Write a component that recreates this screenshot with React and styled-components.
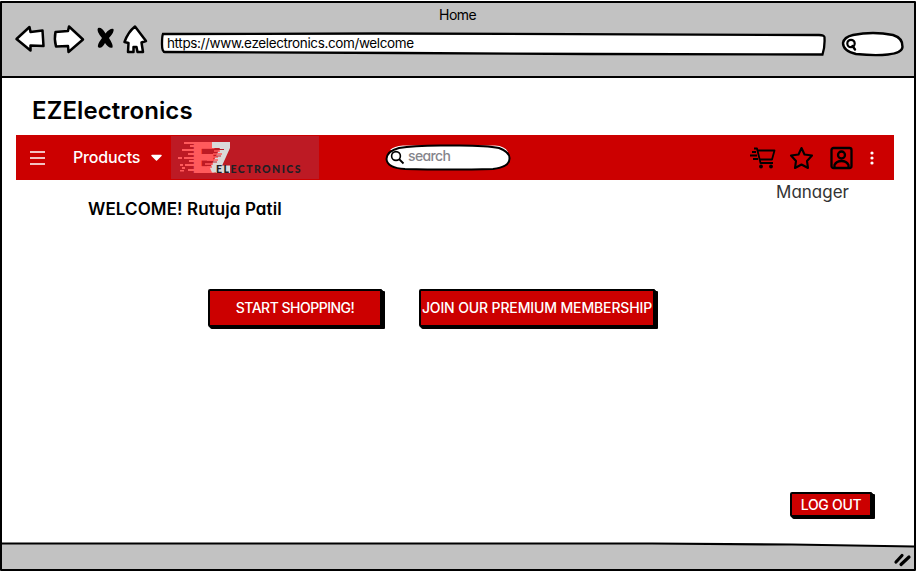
import React from "react";
import styled, { createGlobalStyle } from "styled-components";

const Global = createGlobalStyle`
  * { box-sizing: border-box; }
  body {
    margin: 0;
    background: #fff;
    color: #000;
    font-family: "Inter", "Liberation Sans", sans-serif;
    font-feature-settings: "cv11";
  }
  svg { display: block; flex: none; overflow: visible; }
`;

const Browser = styled.div`
  width: 917px;
  height: 572px;
  padding: 1px 1px 1px 0;
  display: flex;
`;
const Frame = styled.div`
  flex: 1;
  display: flex;
  flex-direction: column;
  border: solid #000;
  border-width: 2px;
  border-radius: 1px;
`;
const Chrome = styled.header`
  height: 75px;
  background: #c2c2c2;
  border-bottom: 2px solid #000;
`;
const TabTitle = styled.div`
  height: 23px;
  line-height: 23px;
  padding-left: 437px;
`;
const Toolbar = styled.div`
  display: flex;
  align-items: flex-start;
  padding-left: 13px;
`;
const ToolIcon = styled.div`
  width: ${(p) => p.$w}px;
  padding-top: ${(p) => p.$top}px;
`;
const AddressBar = styled.div`
  position: relative;
  width: 667px;
  height: 24px;
  margin: 5px 14px 0 0;
  padding-left: 7px;
  line-height: 23px;
`;
const Outline = styled.svg`
  position: absolute;
  left: 0;
  top: 0;
`;
const Label = styled.span`
  position: relative;
  display: inline-block;
  white-space: nowrap;
  font-size: ${(p) => p.$size}px;
  font-weight: ${(p) => p.$weight || 400};
  letter-spacing: ${(p) => p.$track || 0}px;
  color: ${(p) => p.$color || "inherit"};
`;
const Page = styled.main`
  flex: 1;
  padding: 0 20px 0 14px;
`;
const Brand = styled.h1`
  margin: 0;
  height: 57px;
  padding: 18px 0 0 16px;
  line-height: 29px;
  font-size: 24px;
`;
const Nav = styled.nav`
  height: 45px;
  display: flex;
  align-items: center;
  background: #cc0000;
  color: #fff;
  padding-left: 14px;
`;
const Products = styled.div`
  display: flex;
  align-items: center;
  width: 97px;
  margin-left: 28px;
  margin-right: 1px;
  height: 43px;
  padding-bottom: 2px;
  gap: 11px;
`;
const LogoTile = styled.div`
  width: 148px;
  height: 43px;
  background: #bd1a24;
`;
const Search = styled.div`
  position: relative;
  width: 126px;
  height: 27px;
  margin-left: 66px;
  padding-left: 23px;
  line-height: 23px;
`;
const Actions = styled.div`
  display: flex;
  align-items: center;
  margin-left: auto;
  padding-right: 20px;
  padding-top: 1px;
`;
const Action = styled.div`
  width: ${(p) => p.$w}px;
`;
const Role = styled.div`
  display: flex;
  justify-content: flex-end;
  padding-right: 45px;
  height: 18px;
  line-height: 24px;
`;
const Greeting = styled.h2`
  margin: 0;
  padding-left: 72px;
  height: 91px;
  line-height: 17px;
`;
const CallsToAction = styled.div`
  display: flex;
  gap: 37px;
  padding-left: 192px;
  height: 203px;
`;
const Button = styled.button`
  width: ${(p) => p.$w}px;
  height: ${(p) => p.$h}px;
  padding: 0 0 ${(p) => p.$lift || 0}px;
  display: flex;
  align-items: center;
  justify-content: center;
  font: inherit;
  font-feature-settings: "cv11";
  color: #fff;
  background: #cc0000;
  border: 2px solid #000;
  border-radius: 2px 1px 1px 2px;
  box-shadow: 1px 1px #000, 2px 2px #000, 3px 2px #000;
`;
const SessionRow = styled.div`
  display: flex;
  justify-content: flex-end;
  padding-right: 22px;
`;
const StatusBar = styled.footer`
  height: 26px;
  position: relative;
`;

const Arrow = ({ d, w }) => (
  <svg width={w} height="28">
    <path d={d} fill="#fff" stroke="#000" strokeWidth="2.500" strokeLinejoin="round" />
  </svg>
);

const Logo = () => (
  <svg width="148" height="43" viewBox="0 0 148 43">
    <g fill="#ff5a5c">
      <text x="21" y="37" fontFamily="Inter" fontWeight="900" fontSize="42" textLength="24" lengthAdjust="spacingAndGlyphs">E</text>
      <rect x="13" y="6" width="13" height="2" />
      <rect x="19" y="9" width="9" height="2" />
      <rect x="11" y="13" width="16" height="2" />
      <rect x="17" y="17" width="11" height="2" />
      <rect x="7" y="21" width="4" height="2" />
      <rect x="13" y="21" width="14" height="2" />
      <rect x="18" y="24" width="9" height="2" />
      <rect x="9" y="28" width="3" height="2" />
      <rect x="14" y="28" width="12" height="2" />
      <rect x="11" y="31" width="3" height="2" />
      <rect x="9" y="34" width="4" height="1.500" />
      <rect x="17" y="33" width="9" height="2" />
    </g>
    <path d="M41 6H59V12L48 36.500H41L39 32L49 12H41Z" fill="#d9d9d9" />
    <rect x="45" y="29.500" width="14" height="7.500" fill="#d9d9d9" />
    <path d="M43 15H49M42 18H51M40 21H47M36 24H47M34 28H42M36 31H41" stroke="#ff5a5c" strokeWidth="1.500" />
    <path d="M45 13.500H53M45 20H50M39 26H46" stroke="#bd1a24" strokeWidth="1" />
    <text x="45" y="37.300" fill="#211f24" fontFamily="Lato" fontWeight="900" fontSize="10.500" textLength="84.500">ELECTRONICS</text>
  </svg>
);

export default function App() {
  return (
    <>
      <Global />
      <Browser>
        <Frame>
          <Chrome>
            <TabTitle><Label $size={14} $track={-0.5}>Home</Label></TabTitle>
            <Toolbar>
              <ToolIcon $w={38} $top={0}>
                <Arrow w={30} d="M1.500 13L14.500 1L15.500 6L27.500 4.500L28.500 20L15.500 19.500V24.500Z" />
              </ToolIcon>
              <ToolIcon $w={43} $top={0}>
                <Arrow w={30} d="M2.500 6L15 5L16 0.500L30 13.500L15.500 26L15 20L3 20.500Q1 13 2.500 6Z" />
              </ToolIcon>
              <ToolIcon $w={27} $top={2}>
                <svg width="18" height="22">
                  <path d="M2 0Q6 -1 9.500 5.500Q14 0 17.500 1Q18.500 4 13 10Q17.500 17 16.500 19.500Q13 21 9 15Q6 21 2.500 19.500Q0 18 6 10Q0 3 2 0Z" />
                </svg>
              </ToolIcon>
              <ToolIcon $w={37} $top={0}>
                <Arrow w={24} d="M12 0.500L23 15L18.500 16.500L20 26H14.500L13.500 21H10.500V26H5L5.500 17L1.500 16Q5 6 12 0.500Z" />
              </ToolIcon>
              <AddressBar>
                <Outline width="667" height="24">
                  <path d="M3 3L220 2.500L659 4Q665 4 664.500 7Q665 16 662.500 23.500L430 23L240 22L5 21Q2 21 2 13Q2 5 3 3Z" fill="#fff" stroke="#000" strokeWidth="2.300" />
                </Outline>
                <Label $size={13.5} $track={-0.37}>https://www.ezelectronics.com/welcome</Label>
              </AddressBar>
              <svg width="64" height="30">
                <path d="M12 9Q32 5 52 9Q62 12 61.500 21Q61 27 47 28.500Q34 30 15 28Q2 25 2 17Q3 11 12 9Z" fill="#fff" stroke="#000" strokeWidth="2.400" />
                <circle cx="10" cy="17.500" r="3.700" fill="none" stroke="#000" strokeWidth="2.200" />
                <path d="M11.500 20L14 23.500" stroke="#000" strokeWidth="2.400" strokeLinecap="round" />
              </svg>
            </Toolbar>
          </Chrome>
          <Page>
            <Brand><Label $size={24} $weight={600} $track={0.1}>EZElectronics</Label></Brand>
            <Nav>
              <svg width="15" height="14">
                <path d="M0 1H15M0 7H15M0 13H15" stroke="#fff" strokeWidth="1.500" />
              </svg>
              <Products>
                <Label $size={16} $weight={500} $track={-0.15}>Products</Label>
                <svg width="11" height="7"><path d="M1 2.500H10L5.500 7Z" fill="#fff" stroke="#fff" strokeWidth="1.500" strokeLinejoin="round" /></svg>
              </Products>
              <LogoTile><Logo /></LogoTile>
              <Search>
                <Outline width="126" height="27">
                  <path d="M5 6Q9 2 18 1.500H110Q120 2 123 8Z" fill="#fff" />
                  <path d="M14 4Q30 1 65 1.500Q100 1 114 4Q124.500 8 124.500 14Q125 23 108 25Q65 26 20 25Q2 24 1.500 15Q2 7 14 4Z" fill="#fff" stroke="#000" strokeWidth="2" />
                  <circle cx="11" cy="12" r="4.400" fill="none" stroke="#000" strokeWidth="1.600" />
                  <path d="M14 15L18.500 19.500" stroke="#000" strokeWidth="1.800" />
                </Outline>
                <Label $size={14} $track={-0.65} $weight={500} $color="#85858c">search</Label>
              </Search>
              <Actions>
                <Action $w={40}>
                  <svg width="26" height="22" fill="none" stroke="#000" strokeWidth="1.800">
                    <path d="M4 1.500H7L10.500 16H23M7.500 3.500H24.500L22 12.500H10M2 5H6M0 8.500H7M3 12H8" strokeLinejoin="round" />
                    <circle cx="11" cy="19.500" r="1.900" fill="#000" stroke="none" />
                    <circle cx="21" cy="19.500" r="1.900" fill="#000" stroke="none" />
                  </svg>
                </Action>
                <Action $w={40}>
                  <svg width="23" height="22">
                    <path d="M11.500 1L14.500 7.500L22 8.500L17 14L18 21L11.500 17.500L5 21L6 14L1 8.500L8.500 7.500Z" fill="none" stroke="#000" strokeWidth="2.100" strokeLinejoin="round" />
                  </svg>
                </Action>
                <Action $w={40}>
                  <svg width="22" height="22" fill="none" stroke="#000" strokeWidth="2.300">
                    <rect x="1.500" y="1" width="20" height="20" rx="2" />
                    <circle cx="11.500" cy="8" r="3.500" />
                    <path d="M4.500 20V18Q6.500 14 11.500 14Q16.500 14 18.500 18V20" />
                  </svg>
                </Action>
                <svg width="4" height="14" fill="#fff"><circle cx="2" cy="2" r="1.600" /><circle cx="2" cy="7" r="1.600" /><circle cx="2" cy="12" r="1.600" /></svg>
              </Actions>
            </Nav>
            <Role><Label $size={17} $color="#333">Manager</Label></Role>
            <Greeting><Label $size={17} $weight={600} $track={0.1}>WELCOME! Rutuja Patil</Label></Greeting>
            <CallsToAction>
              <Button $w={174} $h={38} $lift={2}><Label $size={14} $weight={500} $track={-0.5}>START SHOPPING!</Label></Button>
              <Button $w={236} $h={38} $lift={2}><Label $size={14} $weight={500} $track={-0.13}>JOIN OUR PREMIUM MEMBERSHIP</Label></Button>
            </CallsToAction>
            <SessionRow>
              <Button $w={82} $h={25}><Label $size={14} $weight={500} $track={-0.3}>LOG OUT</Label></Button>
            </SessionRow>
          </Page>
          <StatusBar>
            <Outline width="912" height="26">
              <path d="M0 0H650L912 3V26H0Z" fill="#c2c2c2" />
              <path d="M0 0.500H650L790 1.500L912 3.500" fill="none" stroke="#000" strokeWidth="2.200" />
              <path d="M894 19L900 12.500M899 21.500L907 14" fill="none" stroke="#000" strokeWidth="3.200" strokeLinecap="round" />
            </Outline>
          </StatusBar>
        </Frame>
      </Browser>
    </>
  );
}
